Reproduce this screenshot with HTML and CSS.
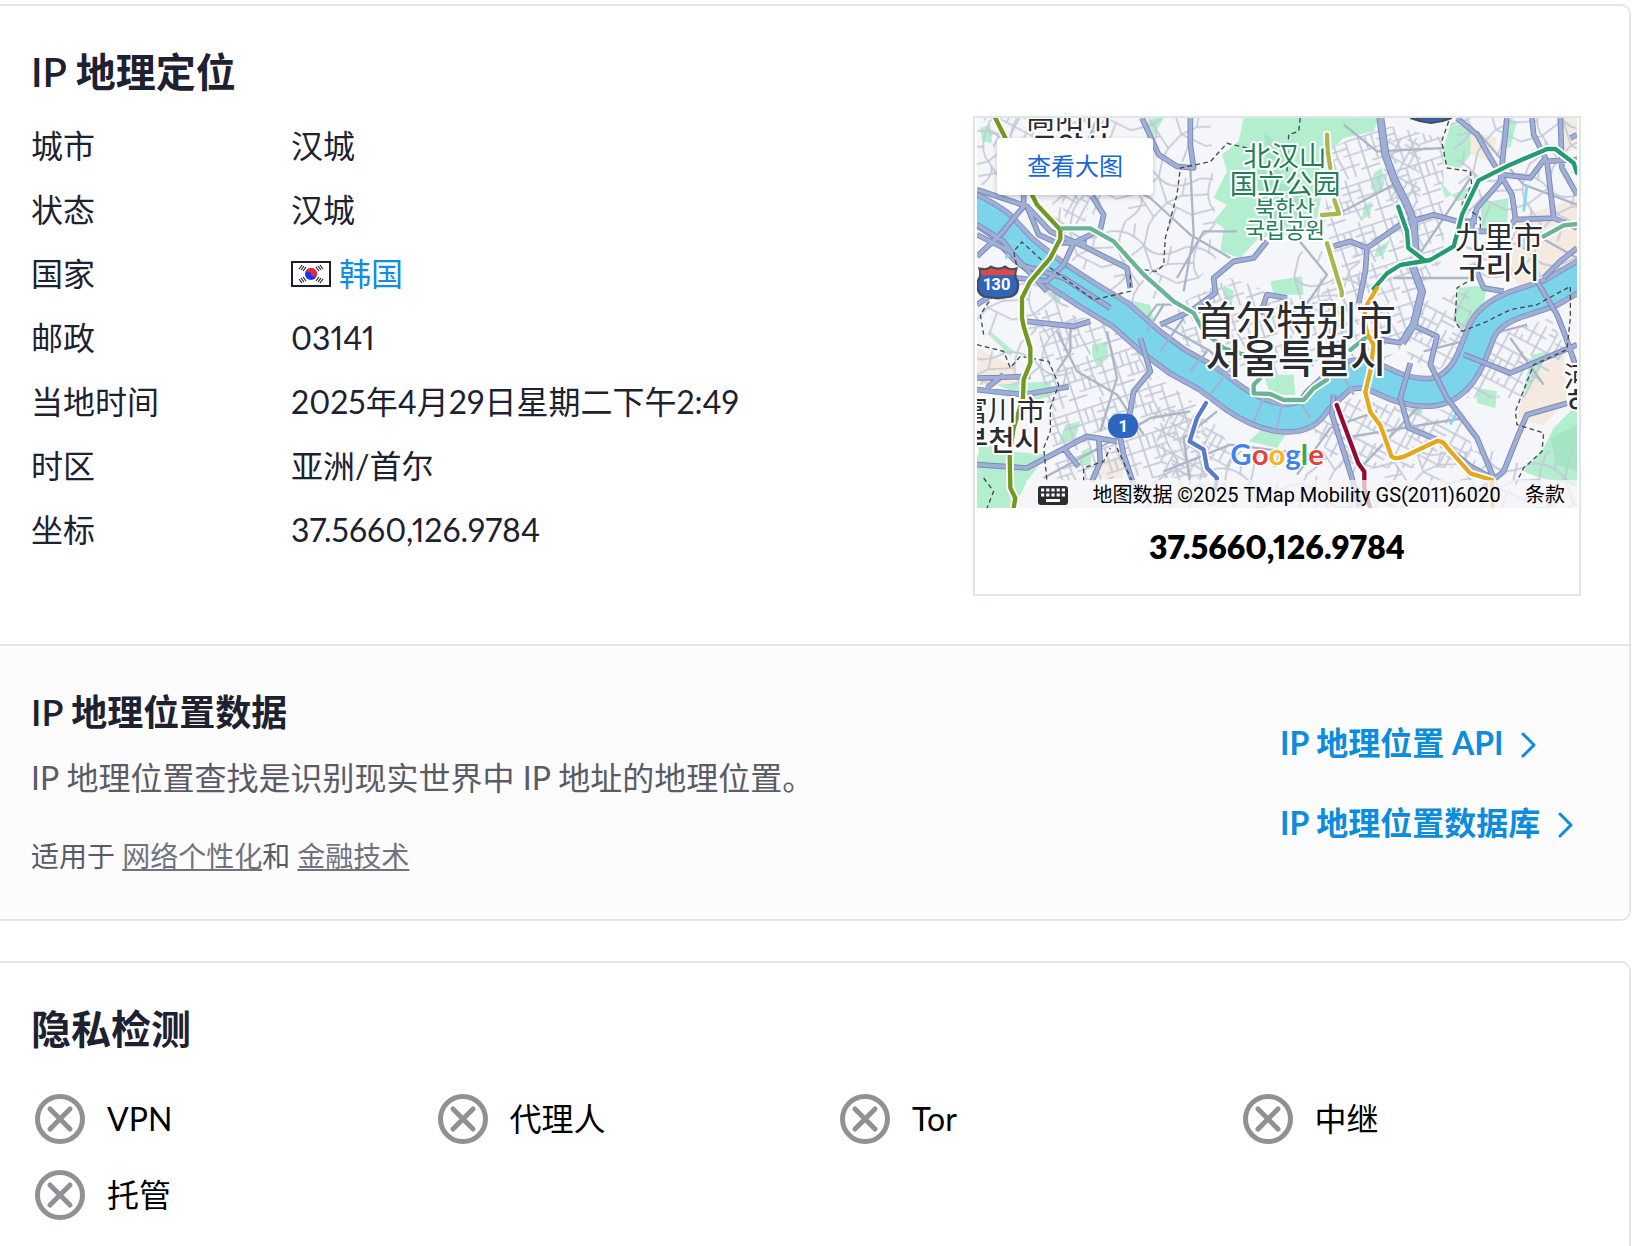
FILE: index.html
```html
<!DOCTYPE html>
<html lang="zh-CN">
<head>
<meta charset="utf-8">
<title>IP 地理定位</title>
<meta name="viewport" content="width=device-width, initial-scale=1">
<link rel="stylesheet" href="styles.css">
</head>
<body>
<svg class="sprite" aria-hidden="true">
  <symbol id="icon-no" viewBox="0 0 58 58">
    <circle cx="29" cy="29" r="22.500" fill="none" stroke="currentColor" stroke-width="5"/>
    <path d="M19 19 39 39M39 19 19 39" fill="none" stroke="currentColor" stroke-width="5" stroke-linecap="round"/>
  </symbol>
  <symbol id="icon-chevron" viewBox="0 0 16 26">
    <path d="M2 2 13 13 2 24" fill="none" stroke="currentColor" stroke-width="3" stroke-linecap="round" stroke-linejoin="round"/>
  </symbol>
</svg>
<main class="page">
  <section class="card">
    <div class="geo">
      <h2 class="title">IP 地理定位</h2>
      <div class="geo-body">
        <dl class="facts">
          <dt>城市</dt><dd>汉城</dd>
          <dt>状态</dt><dd>汉城</dd>
          <dt>国家</dt>
          <dd class="country">
            <svg class="flag" viewBox="0 0 40 26" aria-hidden="true">
              <rect x="1" y="1" width="38" height="24" fill="#fff" stroke="#1c1f33" stroke-width="2"/>
              <circle cx="20" cy="13" r="6" fill="#0b3bf0"/>
              <path d="M14 13a6 6 0 0 1 12 0a3 2.500 0 0 1-6 .5a3 2.500 0 0 0-6-.5z" fill="#ee2430"/>
              <g stroke="#222" stroke-width="1.2">
                <path d="M8 8l3-4M10 9l3-4M12 10l3-4"/>
                <path d="M32 8l-3-4M30 9l-3-4M28 10l-3-4"/>
                <path d="M8 18l3 4M10 17l3 4M12 16l3 4"/>
                <path d="M32 18l-3 4M30 17l-3 4M28 16l-3 4"/>
              </g>
            </svg>
            <a class="link" href="#kr">韩国</a>
          </dd>
          <dt>邮政</dt><dd>03141</dd>
          <dt>当地时间</dt><dd>2025年4月29日星期二下午2:49</dd>
          <dt>时区</dt><dd>亚洲/首尔</dd>
          <dt>坐标</dt><dd>37.5660,126.9784</dd>
        </dl>
        <figure class="map-card">
          <div class="map">
            <svg class="map-art" viewBox="0 0 1800 1170" role="img" aria-label="首尔地图">
              <defs>
                <pattern id="streets-a" width="150" height="130" patternUnits="userSpaceOnUse" patternTransform="rotate(-18)">
                  <path class="street" d="M0 20H150M0 62H90M40 96H150M18 0V130M58 20V96M92 0V62L104 130M128 20V130M70 40H128M0 112H58M38 20V62M76 62V96M110 62H150"/>
                </pattern>
                <pattern id="streets-b" width="130" height="150" patternUnits="userSpaceOnUse" patternTransform="rotate(28)">
                  <path class="street" d="M0 14H130M0 50H80M30 84H130M0 120H130M22 0V150M60 14V84M84 0V120M112 50V150M60 104V120M40 50V120M84 32H130M0 68H22"/>
                </pattern>
                <pattern id="streets-c" width="230" height="210" patternUnits="userSpaceOnUse" patternTransform="rotate(12)">
                  <path class="street" d="M0 40Q60 20 110 60T230 40M40 0Q20 90 60 120T40 210M110 60L150 130L230 150M0 150L60 120L120 180L110 210M110 0V60M150 130L120 180M190 45V100L230 90M0 90L35 80M60 120L110 60M75 45L70 0M150 130L190 100M40 170L90 150M170 210L180 140"/>
                </pattern>
                <path id="river" d="M-40 255Q30 290 70 320L140 395L230 465L330 530L430 590L520 670L600 730L690 780L770 840Q850 895 920 900T1020 850L1090 785Q1140 750 1220 790T1370 822Q1440 810 1480 725L1510 650Q1530 590 1620 558L1720 525L1840 455"/>
              </defs>
              <rect width="1800" height="1170" fill="#f5f6f9"/>
              <g fill="#f4eadf">
                <path d="M1475 40L1560 60 1540 130 1480 110zM1620 300L1800 240V480L1640 520 1600 470zM0 690L100 740 140 800 0 800zM1640 820L1700 740 1760 700 1770 850 1700 920 1620 900zM370 1040L430 1010 440 1080 370 1080zM1740 0H1800V90L1750 110z"/>
              </g>
              <g fill="#b3eecf">
                <path d="M800 0L785 70 735 110 750 160 710 240 750 260 710 310 740 330 730 400 790 420 840 365 900 345 960 350 1020 300 1040 200 1060 100 1100 60 1190 40 1205 0z"/>
                <path d="M1420 20L1480 20 1480 110 1450 150 1405 140 1400 90zM1190 165L1215 150 1222 200 1205 230 1180 210zM1160 265L1185 250 1180 290 1155 305zM1390 190L1405 240 1480 205 1475 240 1440 250zM1510 255L1595 240 1590 330 1515 340zM1445 510L1530 500 1520 570 1450 640 1430 600zM1500 810L1560 820 1555 870 1500 855zM1730 930L1800 860V1100L1690 1080 1640 1060 1700 990zM1665 710L1715 700 1660 800 1635 830z"/>
                <path d="M860 770L950 770 955 830 880 830zM345 680L390 670 395 720 360 745 345 710zM35 635L110 700 100 715 40 655zM265 920L310 910 295 960 245 975zM315 1000L345 985 340 1045 310 1040zM0 970L90 1000 210 1010 150 1090 110 1170H0zM815 970L870 920 925 950 900 990zM60 800L220 790 230 830 170 850zM10 30L40 20 45 75 15 70zM200 430L240 440 260 500 220 490zM210 530L250 510 250 560zM450 545L520 560 530 610 480 590zM740 500L770 520 765 560 740 540zM880 490L975 475 980 530 890 530zM1200 390L1240 365 1220 410 1190 420z"/>
                <path d="M1300 860L1340 855 1335 890 1305 890zM1580 0L1620 10 1600 90 1570 80zM500 20L530 0H560L520 70z"/>
              </g>
              <path d="M860 40L940 110 900 190 980 230 960 300 900 330 860 250 830 180 870 120z" fill="#a2e6c3"/>
              <path d="M1720 960L1800 920V1060L1740 1040z" fill="#a2e6c3"/>
              <g fill="url(#streets-c)">
                <path d="M180 0H700L720 420 560 600 430 540 250 400zM0 0H200V200H0zM1420 0H1800V480H1480zM0 440L240 520 300 600 280 800H0zM620 1000H1800V1170H450zM950 400H1150V620H950z"/>
              </g>
              <g fill="url(#streets-a)">
                <path d="M1060 90L1220 20 1400 60 1400 420 1330 520 1350 640 1200 740 1060 700 1000 560 1100 460 1040 330zM180 570L430 620 520 760 660 860 720 1080H480L240 1090 200 780z"/>
                <path d="M600 560L760 480 1000 560 1040 740 860 780 620 680z"/>
              </g>
              <g fill="url(#streets-b)">
                <path d="M1000 920L1120 840 1300 870 1460 880 1500 1050H1080zM1540 660L1720 600 1770 700 1640 840 1460 840zM520 860L700 900 800 1040 560 1080zM1300 560L1480 520 1490 680 1380 760 1290 720z"/>
                <path d="M20 0H170V160L80 180zM1200 60H1330V420L1260 330zM240 180L350 200 320 330 270 330z"/>
              </g>
              <path class="street major" d="M400 180L520 240 640 350 760 420M640 150L650 350 620 520M360 0L300 150 370 260M780 340L680 340 600 480M1100 20L1200 100 1400 90M1060 300L1250 200M1320 420L1480 180M560 620L700 700 780 780M240 640L300 760 420 830 500 950M200 1080L420 960 520 900 640 880M560 1060L760 980 1000 1010M1100 960L1460 900M1160 1040L1330 860M960 360L1050 470 960 600M1250 480L1480 480M1340 700L1650 620M1600 660L1700 800M960 1070L1060 930 1200 880M280 620L280 700 240 760M390 640L420 780 370 940M1500 40L1640 200 1800 260M1640 330L1800 420M480 640L540 560 600 560M640 1100L620 960 720 880"/>
              <use href="#river" class="bank-edge"/>
              <use href="#river" class="bank-road"/>
              <use href="#river" class="bank-edge-inner"/>
              <use href="#river" class="water"/>
              <path d="M1650 200L1640 280M85 420L120 390M60 360L130 380M1420 920L1440 880" fill="none" stroke="#85d9eb" stroke-width="9"/>
              <g class="bridge">
                <path d="M510 640L560 560M550 700L620 600M700 830L760 750M830 910L860 840M900 930L915 860M1000 900L960 840M1130 830L1080 740M180 480L240 410M60 380L110 310M640 760L690 700"/>
              </g>
              <g class="road-casing">
                <path id="motorways" d="M0 215L150 265 220 340 320 385 450 450 460 510M140 220V265L70 350 0 415M495 0L545 110 600 145 650 150 640 80V0M345 235L380 290 370 335 290 375 260 440 210 490 120 480 30 540 0 560M0 320L80 370 130 440 260 480 400 570M150 265L185 350 240 375 330 375M0 350L100 400 210 520M870 370L830 420 770 430 710 480 715 525 640 580 550 620M1070 385L1120 370 1170 390 1270 320 1370 290 1440 310 1500 310M1170 390L1165 460 1145 555M1440 0L1500 50 1540 120 1570 170 1605 230 1615 300 1600 330M1590 0L1575 140 1570 190 1500 270 1480 340 1540 340M1665 0L1670 50 1705 120 1660 180 1575 170M1700 130L1800 125M1710 130L1730 300M1750 0L1755 150 1800 230M1615 305L1730 300 1800 330M1490 440L1520 510 1580 520M1680 490L1740 590 1760 640 1795 740M1315 625L1380 655 1360 740 1410 840 1500 960 1550 1080M1300 735L1270 840 1295 930 1380 965 1480 1045 1545 1080M1460 710L1600 765 1800 680M1770 856L1650 890 1620 960 1580 1060 1520 1110M1070 830L1065 890 1125 1080 1150 1170M0 815L140 830 275 806M0 780L160 775M30 810L80 770M0 1040L150 1050 330 955 420 970M260 990L305 1046M365 960L370 1030 345 1090M490 660L520 760 470 820 460 880 430 960 440 1010 470 1100M150 610L290 625 340 610M1700 480L1750 430 1800 390M850 590L870 530 930 540M1780 60L1800 50M1210 665L1275 675"/>
                <path id="express" d="M1210 0L1225 110 1250 180 1290 260 1310 310 1315 400M1305 440L1335 520 1310 620 1275 675"/>
              </g>
              <use href="#motorways" class="road"/>
              <path class="road wide" d="M1210 0L1225 110 1250 180 1290 260 1310 310 1315 400M1305 440L1335 520 1310 620 1275 675"/>
              <path class="border-line" d="M810 90L750 76 700 131 610 150 600 230 565 360 560 440 540 460 495 455M460 470V520L350 545 220 450 135 372 110 400 120 450M970 0L965 40 935 50 930 160M1415 10L1394 70 1410 150 1480 160 1484 200 1455 260 1510 300V340M1490 480L1440 510 1434 610 1455 640 1530 610 1600 575 1680 560 1780 505V600L1770 695 1670 740 1615 880 1620 920 1700 945 1695 1000 1640 1050 1615 1100M0 680L80 700 100 750 130 715 215 730 245 800 220 870V940L200 990 210 1090M50 530L10 590 20 650M320 1090V1050L380 1030 400 990M420 990L470 1100M20 1080L50 1120 30 1170"/>
              <g class="rail-casing">
                <path id="rail-olive" d="M55 0L90 70 165 230 180 260 250 335V362L220 420 160 490 135 540V600L140 625 160 690V735L140 785 138 840 110 930 98 1010 100 1110 115 1140 110 1170"/>
                <path id="rail-mint" d="M255 331H340L410 370 500 470 590 550 650 585 680 640 740 690 800 710M1050 785L1010 811 980 846H920L880 828 830 826V800L850 780M1120 696L1170 656M1700 355L1760 322 1800 318"/>
                <path id="rail-green" d="M1264 266L1290 340 1294 390 1340 425M1190 512L1230 466 1270 441 1360 426 1430 385 1445 330 1455 290 1505 187 1600 140 1710 93H1735L1790 135 1800 165"/>
                <path id="rail-lime" d="M1050 50L1052 100 1060 150M1072 246L1086 287 1035 291M1050 376L1094 520V532"/>
                <path id="rail-amber" d="M1200 510L1170 560 1160 600 1172 650 1190 680 1180 760 1165 822 1180 882 1210 922 1244 1016Q1254 1025 1280 1016L1380 969Q1400 969 1410 988L1480 1066 1545 1086 1547 1170"/>
                <path id="rail-wine" d="M1079 861L1144 1036 1162 1061V1110L1180 1170"/>
                <path id="rail-blue" d="M687 855L660 900 638 970 680 995 690 1050 720 1080 715 1110"/>
              </g>
              <g class="rail">
                <use href="#rail-olive" stroke="#72991f"/>
                <use href="#rail-mint" stroke="#68b495"/>
                <use href="#rail-green" stroke="#259b72"/>
                <use href="#rail-lime" stroke="#a7b74b"/>
                <use href="#rail-amber" stroke="#e3a81f"/>
                <use href="#rail-wine" stroke="#940a35"/>
                <use href="#rail-blue" stroke="#5b7ac6"/>
              </g>
              <g class="place">
                <text x="277" y="32" font-size="86">高阳市</text>
                <text class="ko" x="280" y="116" font-size="84">고양시</text>
                <text x="1566" y="389" font-size="88">九里市</text>
                <text class="ko" x="1567" y="480" font-size="88">구리시</text>
                <text x="957" y="651" font-size="120">首尔特别市</text>
                <text class="ko" x="957" y="765" font-size="118">서울특별시</text>
                <text x="76" y="910" font-size="86">富川市</text>
                <text class="ko" x="73" y="1000" font-size="86">부천시</text>
                <text x="1886" y="808" font-size="84">河南市</text>
                <text class="ko" x="1886" y="885" font-size="84">하남시</text>
              </g>
              <g class="park">
                <text x="924" y="143" font-size="83">北汉山</text>
                <text x="924" y="228" font-size="83">国立公园</text>
                <text class="ko" x="924" y="293" font-size="65">북한산</text>
                <text class="ko" x="924" y="360" font-size="65">국립공원</text>
              </g>
              <path d="M8 452Q30 458 42 446 62 458 84 446 96 458 118 452 110 475 122 490 128 528 100 536 82 538 62 541 42 538 24 536-4 528 2 490 14 475 8 452z" fill="#2f66bb" stroke="#454c5c" stroke-width="7"/>
              <path d="M10 455Q30 460 42 450 62 460 84 450 96 460 116 455L111 472H13z" fill="#dc4a45"/>
              <text class="badge" x="60" y="517" font-size="50">130</text>
              <rect x="393" y="887" width="90" height="73" rx="34" fill="#2c66bf"/>
              <text class="badge" x="438" y="941" font-size="50">1</text>
              <path d="M1300 0Q1330 12 1362 15 1395 12 1424 0z" fill="#2f66bb" stroke="#454c5c" stroke-width="6"/>
              <text class="google" x="760" y="1041" font-size="88"><tspan fill="#4083f0">G</tspan><tspan fill="#e2443a">o</tspan><tspan fill="#f5b51d">o</tspan><tspan fill="#4083f0">g</tspan><tspan fill="#37a657">l</tspan><tspan fill="#e2443a">e</tspan></text>
            </svg>
            <a class="map-open" href="#map">查看大图</a>
            <div class="map-legal">
              <button class="keys" type="button" aria-label="键盘快捷键">
                <svg viewBox="0 0 30 20" aria-hidden="true">
                  <rect y="1" width="30" height="19" rx="3" fill="#2b2d30"/>
                  <path d="M3 5h24M3 10h24" stroke="#fff" stroke-width="3" stroke-dasharray="3.200 2"/>
                  <path d="M8 15.500h14" stroke="#fff" stroke-width="3"/>
                </svg>
              </button>
              <span>地图数据 ©2025 TMap Mobility GS(2011)6020</span>
              <a href="#terms">条款</a>
            </div>
          </div>
          <figcaption class="map-caption">37.5660,126.9784</figcaption>
        </figure>
      </div>
    </div>
    <div class="about">
      <div class="about-text">
        <h3 class="subtitle">IP 地理位置数据</h3>
        <p class="lead">IP 地理位置查找是识别现实世界中 IP 地址的地理位置。</p>
        <p class="uses">适用于 <a href="#web">网络个性化</a>和 <a href="#fintech">金融技术</a></p>
      </div>
      <nav class="products">
        <a class="product" href="#api">IP 地理位置 API<svg class="chevron" aria-hidden="true"><use href="#icon-chevron"/></svg></a>
        <a class="product" href="#database">IP 地理位置数据库<svg class="chevron" aria-hidden="true"><use href="#icon-chevron"/></svg></a>
      </nav>
    </div>
  </section>
  <section class="card privacy">
    <h2 class="title">隐私检测</h2>
    <ul class="checks">
      <li><svg class="no" aria-hidden="true"><use href="#icon-no"/></svg>VPN</li>
      <li><svg class="no" aria-hidden="true"><use href="#icon-no"/></svg>代理人</li>
      <li><svg class="no" aria-hidden="true"><use href="#icon-no"/></svg>Tor</li>
      <li><svg class="no" aria-hidden="true"><use href="#icon-no"/></svg>中继</li>
      <li><svg class="no" aria-hidden="true"><use href="#icon-no"/></svg>托管</li>
    </ul>
  </section>
</main>
</body>
</html>
```
FILE: styles.css
```css
* { box-sizing: border-box; }

body {
  margin: 0;
  background: #fff;
  color: #1d2130;
  font-family: Lato, "Noto Sans CJK SC", sans-serif;
  font-size: 32px;
  line-height: 44px;
  font-variant-numeric: proportional-nums;
}

h2, h3, p, dl, dd, ul, figure { margin: 0; padding: 0; }

.sprite { position: absolute; width: 0; height: 0; }

.page {
  display: flex;
  flex-direction: column;
  gap: 40px;
  min-height: 100vh;
  padding: 4px 3px 0 0;
}

.card {
  border: 2px solid #e5e5e6;
  border-left: 0;
  border-radius: 0 10px 10px 0;
  overflow: hidden;
}

.title {
  margin-bottom: 18px;
  font-size: 40px;
  line-height: 48px;
  font-weight: 600;
}

.geo { padding: 42px 48px 48px 31px; }

.geo-body {
  display: flex;
  justify-content: space-between;
  align-items: flex-end;
}

.facts {
  display: grid;
  grid-template-columns: 260px auto;
  grid-auto-rows: 64px;
  align-items: center;
  align-self: flex-start;
}

.country { display: flex; align-items: center; gap: 8px; }
.flag { width: 40px; height: 26px; }
.link { color: #118de0; text-decoration: none; }

.map-card {
  width: 608px;
  height: 480px;
  margin-top: 2px;
  border: 2px solid #e0e5e6;
  padding: 0 2px;
}

.map { position: relative; overflow: hidden; }
.map-art { display: block; width: 100%; }

.street { fill: none; stroke: #c3c8d7; stroke-width: 5; }
.street.major { stroke: #aeb5c9; stroke-width: 7; stroke-linejoin: round; }
.bank-edge, .bank-road, .bank-edge-inner, .water { fill: none; stroke-linejoin: round; }
.bank-edge { stroke: #7d8cbd; stroke-width: 100; }
.bank-road { stroke: #a0afd5; stroke-width: 95; }
.bank-edge-inner { stroke: #7d8cbd; stroke-width: 72; }
.water { stroke: #7bd4e9; stroke-width: 67; }
.bridge { fill: none; stroke: #9fb4cf; stroke-width: 7; }
.road-casing { fill: none; stroke: #7b8abb; stroke-width: 17; stroke-linejoin: round; }
.road { fill: none; stroke: #a0afd5; stroke-width: 11; stroke-linejoin: round; }
.road.wide { stroke-width: 18; }
#express { stroke-width: 24; }
#motorways { stroke-width: inherit; }
.border-line { fill: none; stroke: #45484d; stroke-width: 4; stroke-dasharray: 14 10; }
.rail-casing { fill: none; stroke: #fff; stroke-width: 24; stroke-linejoin: round; stroke-linecap: round; }
.rail { fill: none; stroke-width: 13; stroke-linejoin: round; stroke-linecap: round; }

.place text, .park text {
  font-family: "Noto Sans CJK SC", sans-serif;
  text-anchor: middle;
  paint-order: stroke;
  stroke: #fff;
  stroke-width: 12;
  stroke-linejoin: round;
}
.place text { fill: #292c31; }
.park text { fill: #207d5a; }
.place .ko { font-family: "Noto Sans CJK KR", sans-serif; font-weight: 500; }
.park .ko { font-family: "Noto Sans CJK KR", sans-serif; }
.badge { fill: #fff; font-family: Roboto, sans-serif; font-weight: 700; text-anchor: middle; }
.google {
  font-family: Lato, sans-serif;
  font-weight: 700;
  paint-order: stroke;
  stroke: #fff;
  stroke-width: 8;
}

.map-open {
  position: absolute;
  top: 20px;
  left: 20px;
  padding: 6px 30px 7px;
  border-radius: 4px;
  background: #fff;
  box-shadow: 0 2px 5px rgba(0, 0, 0, .2);
  color: #1967d8;
  font-size: 24px;
  text-decoration: none;
}

.map-legal {
  position: absolute;
  right: 0;
  bottom: 0;
  display: flex;
  align-items: center;
  gap: 24px;
  height: 28px;
  padding: 2px 12px 0 12px;
  background: rgba(245, 246, 248, .75);
  color: #000;
  font-family: Roboto, "Noto Sans CJK SC", sans-serif;
  font-size: 20px;
  line-height: 28px;
  white-space: nowrap;
}
.map-legal a { color: inherit; text-decoration: none; }
.keys { display: flex; padding: 0; border: 0; background: none; }
.keys svg { width: 30px; height: 20px; }

.map-caption {
  padding-top: 17px;
  color: #000;
  font-weight: 800;
  text-align: center;
}

.about {
  display: flex;
  justify-content: space-between;
  align-items: center;
  padding: 44px 48px 43px 31px;
  border-top: 2px solid #e5e5e6;
  background: #fcfcfd;
}

.subtitle { margin-bottom: 22px; font-size: 36px; font-weight: 600; }
.lead { margin-bottom: 36px; color: #5a5b66; }
.uses { color: #5a5b66; font-size: 28px; line-height: 40px; }
.uses a { color: #70727d; }

.products { display: flex; flex-direction: column; gap: 36px; min-width: 301px; }
.product {
  display: flex;
  align-items: center;
  gap: 18px;
  color: #0d8bdc;
  font-weight: 700;
  text-decoration: none;
  white-space: nowrap;
}
.chevron { width: 16px; height: 26px; margin-top: 4px; }

.privacy {
  flex: 1;
  padding: 42px 32px 12px 31px;
  border-bottom: 0;
  border-bottom-right-radius: 0;
}
.privacy .title { margin-bottom: 28px; }

.checks {
  display: grid;
  grid-template-columns: repeat(4, 1fr);
  grid-auto-rows: 76px;
  column-gap: 44px;
  color: #000;
  list-style: none;
}
.checks li { display: flex; align-items: center; gap: 18px; }
.no { width: 58px; height: 58px; color: #8f9197; }
```
